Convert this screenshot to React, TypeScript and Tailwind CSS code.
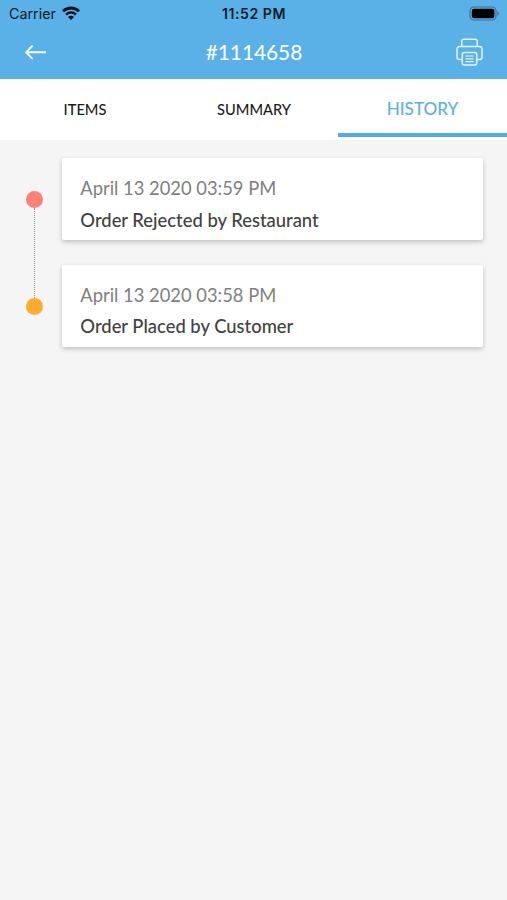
import React from "react";

const tabs = [
  { label: "ITEMS", active: false },
  { label: "SUMMARY", active: false },
  { label: "HISTORY", active: true },
];

const events = [
  {
    date: "April 13 2020 03:59 PM",
    title: "Order Rejected by Restaurant",
    dot: "bg-[#ff8074]",
  },
  {
    date: "April 13 2020 03:58 PM",
    title: "Order Placed by Customer",
    dot: "bg-[#ffab2e]",
  },
];

function StatusBar() {
  return (
    <div className="grid h-[26px] grid-cols-3 items-center pl-[9px] pr-[7px] pt-[2px] font-['Inter',sans-serif] text-[#0b1a26]">
      <div className="flex items-center gap-[6px]">
        <span className="text-[14.3px] leading-none">Carrier</span>
        <svg className="-mt-[2px]" width="18" height="14" viewBox="0 0 18 14" fill="none">
          <path d="M1 5.3C5.6 .9 12.4 .9 17 5.3" stroke="#06111a" strokeWidth="2.8" />
          <path d="M4 8.6C7 5.8 11 5.8 14 8.6" stroke="#06111a" strokeWidth="2.4" />
          <path d="M9 14L6 10.9C7.8 9.3 10.2 9.3 12 10.9Z" fill="#06111a" />
        </svg>
      </div>
      <span className="-ml-[1px] text-center text-[14.1px] font-semibold leading-none tracking-[0.55px]">
        11:52 PM
      </span>
      <svg className="-mt-[2px] justify-self-end" width="31" height="15" viewBox="0 0 31 15" fill="none">
        <rect x="1" y="1" width="26" height="13" rx="4" stroke="#3c7397" strokeWidth="1.2" />
        <rect x="2.8" y="2.7" width="22.6" height="9.6" rx="2.2" fill="#000" />
        <path d="M28.3 5.2c2 .7 2 4 0 4.7z" fill="#3c7397" />
      </svg>
    </div>
  );
}

function Header() {
  return (
    <div className="flex h-[53px] items-center justify-between pb-[2px] pl-[25px] pr-[24px]">
      <svg width="27" height="16" viewBox="0 0 27 16" fill="none">
        <path
          d="M20.3 8.3H1.5M7 2.2L1.2 8.3L7 14.4"
          stroke="#fff"
          strokeWidth="1.9"
          strokeLinecap="round"
          strokeLinejoin="round"
        />
      </svg>
      <h1 className="pt-[2px] text-[20.8px] leading-none text-white">#1114658</h1>
      <svg
        width="27"
        height="28"
        viewBox="0 0 27 28"
        fill="none"
        stroke="#e0f4ff"
        strokeWidth="1.5"
        strokeLinejoin="round"
        strokeLinecap="round"
      >
        <path d="M5.8 8.2V3.2a2 2 0 0 1 2-2h11.4a2 2 0 0 1 2 2v5" />
        <path d="M6.3 21.5H3.6a2.6 2.6 0 0 1-2.6-2.6V11a2.6 2.6 0 0 1 2.6-2.6h19.8A2.6 2.6 0 0 1 26 11v7.9a2.6 2.6 0 0 1-2.6 2.6h-2.7" />
        <path d="M6.3 16.6a2 2 0 0 1 2-2h10.4a2 2 0 0 1 2 2V25a2 2 0 0 1-2 2H8.3a2 2 0 0 1-2-2Z" />
        <path d="M9.8 18h7.4M9.8 20.8h7.4M9.8 23.6h7.4" strokeWidth="1.2" />
      </svg>
    </div>
  );
}

export default function App() {
  return (
    <div className="flex min-h-screen flex-col bg-[#f5f5f5] font-['Lato',sans-serif]">
      <header className="bg-[#5ab1e8]">
        <StatusBar />
        <Header />
      </header>
      <nav className="grid h-[61px] grid-cols-3 bg-white">
        {tabs.map((tab) => (
          <div key={tab.label} className="flex flex-col items-center justify-between">
            <span
              className={
                tab.active
                  ? "pt-[21px] text-[17.1px] font-medium leading-[18px] text-[#5ab1e8]"
                  : "pl-px pt-[22px] text-[14.6px] font-medium leading-[18px] text-[#1c1c1c]"
              }
            >
              {tab.label}
            </span>
            {tab.active && <div className="mb-[3px] h-[4px] w-full bg-[#52ace4]" />}
          </div>
        ))}
      </nav>
      <main className="flex flex-col gap-[24.5px] pl-[26px] pr-[24px] pt-[18.4px]">
        {events.map((event, id) => (
          <div key={id} className="flex">
            <div className="relative flex w-[36px] shrink-0 items-center">
              {id < events.length - 1 && (
                <div className="absolute left-[8px] top-[50px] h-[90px] border-l border-dotted border-[#8f8f8f]" />
              )}
              <div className={`mt-px size-[17px] rounded-full ${event.dot}`} />
            </div>
            <div className="h-[82px] flex-1 rounded-[2px] bg-white pl-[18.3px] pt-[19px] shadow-[0_2px_5px_rgba(0,0,0,0.22)]">
              <p className="text-[18.35px] leading-[22px] text-[#808080]">{event.date}</p>
              <p className="mt-[9.5px] text-[18.4px] font-medium leading-[22px] text-[#424242]">
                {event.title}
              </p>
            </div>
          </div>
        ))}
      </main>
    </div>
  );
}
